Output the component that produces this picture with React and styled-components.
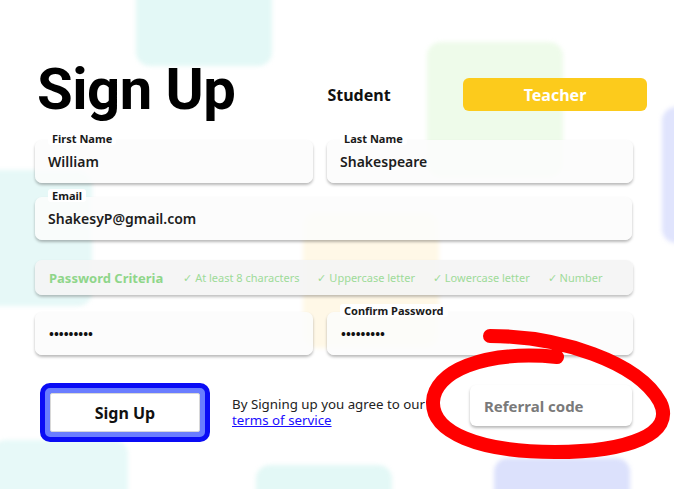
import React from 'react';
import styled, { createGlobalStyle } from 'styled-components';

const GlobalStyle = createGlobalStyle`
  body {
    margin: 0;
    background: #fff;
    font-family: "Noto Sans", "Open Sans", sans-serif;
    color: #1d1d1d;
  }
`;

const blobs = [
  { x: 136, y: -70, c: '#e3f8f6' },
  { x: 427, y: 42, c: '#eefbea' },
  { x: 662, y: 107, c: '#e0e4fd' },
  { x: -44, y: 170, c: '#e6f8f7' },
  { x: 303, y: 212, c: '#fff8e7' },
  { x: -8, y: 440, c: '#e7f9f8' },
  { x: 256, y: 465, c: '#e3f8f6' },
  { x: 494, y: 458, c: '#dce1fc' },
];

const criteria = ['At least 8 characters', 'Uppercase letter', 'Lowercase letter', 'Number'];

export default function App() {
  return (
    <Page>
      <GlobalStyle />
      {blobs.map((b, i) => (
        <Blob key={i} style={{ left: b.x, top: b.y, background: b.c }} />
      ))}

      <Content>
        <Header>
          <Title>Sign Up</Title>
          <Tabs>
            <Tab>Student</Tab>
            <Tab $active>Teacher</Tab>
          </Tabs>
        </Header>

        <Row $mt={22}>
          <Field $w={278}>
            <Label>First Name</Label>
            <Value>William</Value>
          </Field>
          <Field $w={306}>
            <Label>Last Name</Label>
            <Value>Shakespeare</Value>
          </Field>
        </Row>

        <Row $mt={14}>
          <Field $w={597}>
            <Label>Email</Label>
            <Value>ShakesyP@gmail.com</Value>
          </Field>
        </Row>

        <Criteria>
          <CriteriaTitle>Password Criteria</CriteriaTitle>
          {criteria.map(c => (
            <CriteriaItem key={c}>✓ {c}</CriteriaItem>
          ))}
        </Criteria>

        <Row $mt={17}>
          <Field $w={278}>
            <Dots>•••••••••</Dots>
          </Field>
          <Field $w={306}>
            <Label>Confirm Password</Label>
            <Dots>•••••••••</Dots>
          </Field>
        </Row>

        <Bottom>
          <SubmitFrame>
            <Submit>Sign Up</Submit>
          </SubmitFrame>
          <Terms>
            <TermsLine>By Signing up you agree to our</TermsLine>
            <TermsLine><a href="#terms">terms of service</a></TermsLine>
          </Terms>
          <Referral>Referral code</Referral>
        </Bottom>
      </Content>

      <Scribble viewBox="0 0 674 489" width="674" height="489">
        <path
          d="M490,336 C560,336 638,362 660,402 C676,434 628,452 555,452 C478,452 432,432 433,402 C434,372 482,350 557,357"
          fill="none"
          stroke="#ff0000"
          strokeWidth="14"
          strokeLinecap="round"
          strokeLinejoin="round"
        />
      </Scribble>
    </Page>
  );
}

const Page = styled.div`
  position: relative;
  width: 674px;
  height: 489px;
  overflow: hidden;
`;

const Blob = styled.div`
  position: absolute;
  width: 136px;
  height: 136px;
  border-radius: 14px;
  filter: blur(2px);
  z-index: 0;
`;

const Content = styled.div`
  position: relative;
  z-index: 1;
  padding: 60px 0 0 35px;
  width: 598px;
`;

const Header = styled.div`
  display: flex;
  align-items: flex-start;
  height: 58px;
`;

const Title = styled.h1`
  margin: 0 0 0 2px;
  font-family: Roboto, "Noto Sans", sans-serif;
  font-weight: 700;
  font-size: 58px;
  line-height: 58px;
  letter-spacing: -0.5px;
  color: #000;
`;

const Tabs = styled.div`
  margin: 18px -14px 0 auto;
  display: flex;
  gap: 12px;
`;

const Tab = styled.div`
  width: 184px;
  height: 33px;
  border-radius: 6px;
  display: flex;
  align-items: center;
  justify-content: center;
  font-weight: 700;
  font-size: 16px;
  color: ${p => (p.$active ? '#fff' : '#111')};
  background: ${p => (p.$active ? '#fccb1c' : 'transparent')};
`;

const Row = styled.div`
  display: flex;
  justify-content: space-between;
  margin-top: ${p => p.$mt}px;
`;

const Field = styled.div`
  position: relative;
  width: ${p => p.$w}px;
  height: 43px;
  box-sizing: border-box;
  padding: 0 13px;
  display: flex;
  align-items: center;
  border-radius: 7px;
  background: rgba(252, 252, 252, 0.88);
  box-shadow: 0 2px 3px rgba(0, 0, 0, 0.28);
`;

const Label = styled.span`
  position: absolute;
  left: 13px;
  top: -8px;
  padding: 0 4px;
  background: #fff;
  border-radius: 3px;
  font-size: 11px;
  line-height: 13px;
  font-weight: 700;
  color: #1a1a1a;
`;

const Value = styled.span`
  font-size: 14px;
  font-weight: 600;
  color: #1d1d1d;
`;

const Dots = styled.span`
  font-size: 13px;
  font-weight: 700;
  color: #111;
  padding: 1px 0 0 1px;
`;

const Criteria = styled.div`
  margin-top: 20px;
  height: 35px;
  box-sizing: border-box;
  padding: 0 14px;
  display: flex;
  align-items: center;
  gap: 18px;
  border-radius: 7px;
  background: rgba(244, 244, 244, 0.92);
  box-shadow: 0 2px 3px rgba(0, 0, 0, 0.25);
`;

const CriteriaTitle = styled.span`
  font-size: 13px;
  font-weight: 700;
  color: #8fd68a;
  margin-right: 2px;
`;

const CriteriaItem = styled.span`
  font-size: 11px;
  color: #9edb99;
`;

const Bottom = styled.div`
  margin-top: 28px;
  display: flex;
  align-items: flex-start;
`;

const SubmitFrame = styled.div`
  margin-left: 5px;
  width: 170px;
  height: 59px;
  box-sizing: border-box;
  border: 5px solid #0a0cf5;
  border-radius: 10px;
  background: #6a7dff;
  padding: 5px;
`;

const Submit = styled.button`
  width: 100%;
  height: 100%;
  border: 1px solid #d8d8d8;
  border-radius: 2px;
  background: #fff;
  font-family: "Noto Sans", sans-serif;
  font-weight: 700;
  font-size: 16px;
  color: #111;
`;

const Terms = styled.div`
  margin: 13px 0 0 22px;
  display: flex;
  flex-direction: column;
  gap: 0;
  font-size: 13.3px;
  color: #222;
  white-space: nowrap;

  a {
    color: #1a0dff;
  }
`;

const TermsLine = styled.span`
  display: block;
  height: 16px;
  line-height: 16px;
`;

const Referral = styled.div`
  margin: 2px 1px 0 auto;
  width: 162px;
  flex-shrink: 0;
  height: 41px;
  box-sizing: border-box;
  padding: 0 14px;
  display: flex;
  align-items: center;
  border-radius: 6px;
  background: #fff;
  box-shadow: 0 2px 3px rgba(0, 0, 0, 0.28);
  font-size: 15px;
  font-weight: 700;
  color: #7a7a7a;
`;

const Scribble = styled.svg`
  position: absolute;
  left: 0;
  top: 0;
  z-index: 2;
  pointer-events: none;
`;
